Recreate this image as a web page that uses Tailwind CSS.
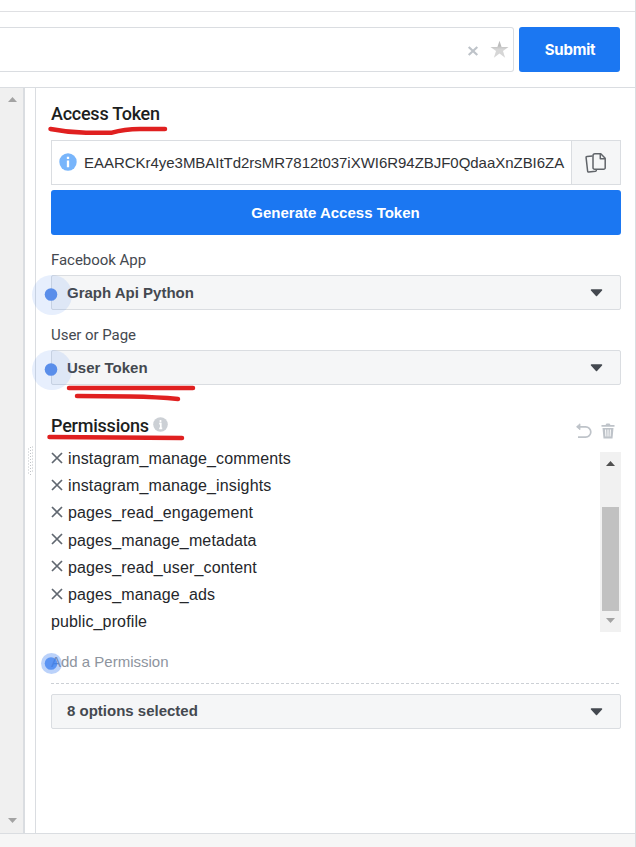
<!DOCTYPE html>
<html lang="en">
<head>
<meta charset="utf-8">
<title>Graph API Explorer</title>
<script src="https://cdn.jsdelivr.net/npm/@tailwindcss/browser@4"></script>
</head>
<body class="bg-white">
<div class="relative flex h-[847px] w-[636px] flex-col overflow-hidden border-r border-[#dadde1] bg-white font-['Liberation_Sans',Arial,sans-serif] text-[#1c1e21]">
  <div class="h-3 shrink-0 border-b border-[#dfe0e3]"></div>
  <header class="flex h-[76px] shrink-0 items-start gap-[5px] border-b border-[#dadde1] pt-[15px]">
    <div class="flex h-[45px] w-[514px] items-center justify-end gap-[11px] rounded-r-[3px] border border-l-0 border-[#dadde1] pr-[4px]">
      <svg class="mt-[2px] h-[12px] w-[12px]" viewBox="0 0 12 12"><path d="M1.700 2l8.600 8M10.300 2l-8.600 8" stroke="#bec3c9" stroke-width="2.200"/></svg>
      <svg class="h-[19px] w-[19px]" viewBox="0 0 19 19"><defs><linearGradient id="s" x2="0" y2="1"><stop offset=".3" stop-color="#bcbcbc"/><stop offset=".5" stop-color="#d6d6d6"/></linearGradient></defs><path d="M9.500 .7l2.100 6.200h6.900l-5.500 4 2.100 6.800-5.600-4.100-5.600 4.100L6 10.900.5 6.900h6.900z" fill="url(#s)"/></svg>
    </div>
    <button class="flex h-[45px] w-[101px] items-center justify-center rounded-[3px] bg-[#1b77f2] pt-[2px] pl-px font-['Inter',sans-serif] text-[15px] font-bold tracking-[-0.2px] text-white">Submit</button>
  </header>
  <main class="flex h-[745px] shrink-0">
    <div class="flex w-[25px] shrink-0 flex-col items-center justify-between border-r-2 border-[#dadde1] bg-[#f0f0f0] pt-[9px] pb-[10px] pl-[2px]">
      <svg class="h-[5px] w-[9px]" viewBox="0 0 9 5"><path d="M0 5h9L4.500 0z" fill="#a3a3a3"/></svg>
      <svg class="h-[5px] w-[9px]" viewBox="0 0 9 5"><path d="M0 0h9L4.500 5z" fill="#a3a3a3"/></svg>
    </div>
    <div class="w-[11px] shrink-0 border-r border-[#dadde1] pt-[358px] pl-[3px]">
      <svg class="h-[30px] w-[5px]" viewBox="0 0 5 30"><g stroke="#bfc2c6" stroke-dasharray="1 2"><path d="M.5 2.500v27M2.500 1v28M4.500 .5v27"/></g></svg>
    </div>
    <section class="flex w-[599px] shrink-0 flex-col pr-[14px] pl-[15px]">
      <h2 class="mt-[14px] h-[24px] font-['Roboto',sans-serif] text-[18px] leading-[24px] font-medium tracking-[-0.25px]">Access Token</h2>
      <div class="mt-[14px] flex h-[45px] border border-[#dadde1]">
        <div class="flex w-[519px] items-center pl-[7px]">
          <svg class="-mt-px h-[18px] w-[18px] shrink-0" viewBox="0 0 18 18"><circle cx="9" cy="9" r="8.700" fill="#78b5fb"/><path d="M9 3.800v2.200M9 7.400v6.800" stroke="white" stroke-width="2.300" fill="none"/></svg>
          <div class="ml-[7px] w-[484px] overflow-hidden pt-[2px] text-[15px] tracking-[-0.03px] whitespace-nowrap text-[#303236]"><span>EAARCKr4ye3MBAItTd2rsMR7812t037iXWI6R94ZBJF0QdaaXnZBI6ZA</span></div>
        </div>
        <div class="flex flex-1 items-center justify-center border-l border-[#dadde1] bg-[#f5f6f7]">
          <svg class="h-[22px] w-[22px]" viewBox="0 0 22 22" fill="none" stroke="#606469" stroke-width="1.500" stroke-linejoin="round"><path d="M7.500 4L2 4.500q-1 .1-.9 1.100L2.600 19q.1 1.100 1.200 1L10.500 19.200q1-.2 1-1.700"/><path d="M10 1.800h5.800l4.400 4.400v9.500a1.600 1.600 0 0 1-1.600 1.600H9.600A1.600 1.600 0 0 1 8 15.700V3.800a2 2 0 0 1 2-2z"/><path d="M15.300 2v4.700h4.700"/></svg>
        </div>
      </div>
      <button class="mt-[5px] flex h-[45px] shrink-0 items-center justify-center rounded-[3px] bg-[#1b77f2] pt-[2px] pr-px text-[15px] font-bold text-white"><span>Generate Access Token</span></button>
      <label class="mt-[15px] h-[20px] font-['Roboto',sans-serif] text-[15px] leading-[20px] tracking-[-0.04px] text-[#444950]"><span>Facebook App</span></label>
      <div class="mt-[5px] flex h-[35px] items-center justify-between rounded-[2px] border border-[#dadde1] bg-[#f5f6f7] pr-[17px] pl-[15px] text-[15px] font-bold text-[#444950]"><span class="pt-[2px]">Graph Api Python</span>
        <svg class="mt-px h-[8px] w-[13px]" viewBox="0 0 13 8"><path d="M1.500 1h10L6.500 6.500z" fill="#444950" stroke="#444950" stroke-width="1.500" stroke-linejoin="round"/></svg></div>
      <label class="mt-[15px] h-[20px] font-['Roboto',sans-serif] text-[15px] leading-[20px] tracking-[-0.04px] text-[#444950]"><span>User or Page</span></label>
      <div class="mt-[5px] flex h-[35px] items-center justify-between rounded-[2px] border border-[#dadde1] bg-[#f5f6f7] pr-[17px] pl-[15px] text-[15px] font-bold text-[#444950]"><span class="pt-[2px]">User Token</span>
        <svg class="mt-px h-[8px] w-[13px]" viewBox="0 0 13 8"><path d="M1.500 1h10L6.500 6.500z" fill="#444950" stroke="#444950" stroke-width="1.500" stroke-linejoin="round"/></svg></div>
      <div class="mt-[29px] flex h-[24px] items-center">
        <h2 class="w-[98px] font-['Roboto',sans-serif] text-[18px] leading-[24px] font-medium tracking-[-0.22px]">Permissions</h2>
        <svg class="mb-[4px] ml-[4px] h-[15px] w-[15px]" viewBox="0 0 15 15"><circle cx="7.500" cy="7.500" r="7.300" fill="#ccd0d5"/><path d="M7.500 3v2.200M6.200 6.600h1.600v5M6.200 11.300h3" stroke="white" stroke-width="1.700" fill="none"/></svg>
        <svg class="mt-[9px] ml-auto h-[16px] w-[17px]" viewBox="0 0 17 16" fill="none" stroke="#bec3c9" stroke-width="1.700"><path d="M5 .8L1.500 3.800l3.500 3z" fill="#bec3c9" stroke-width=".8"/><path d="M2 3.800h8.600a5.200 5.200 0 0 1 0 10.400H3"/></svg>
        <svg class="mt-[9px] mr-[6px] ml-[9px] h-[16px] w-[14px]" viewBox="0 0 14 16"><path d="M.5 2h4L5.500.5h3L9.500 2h4v1.700H.5zM1.500 5h11l-1 10.500h-9z" fill="#bec3c9"/><path d="M4.600 6.500l.3 7M7 6.500v7M9.400 6.500l-.3 7" stroke="white"/></svg>
      </div>
      <div class="mt-[14px] flex h-[180px] justify-between">
        <ul class="-mt-[7px] text-[16px] leading-[27.200px] tracking-[0.13px] text-[#25272b]">
          <li class="flex items-center gap-[5px]"><svg class="-mt-[2px] h-[12px] w-[12px]" viewBox="0 0 12 12"><path d="M1 1l10 10M11 1L1 11" stroke="#606770" stroke-width="1.700"/></svg><span>instagram_manage_comments</span></li>
          <li class="flex items-center gap-[5px]"><svg class="-mt-[2px] h-[12px] w-[12px]" viewBox="0 0 12 12"><path d="M1 1l10 10M11 1L1 11" stroke="#606770" stroke-width="1.700"/></svg><span>instagram_manage_insights</span></li>
          <li class="flex items-center gap-[5px]"><svg class="-mt-[2px] h-[12px] w-[12px]" viewBox="0 0 12 12"><path d="M1 1l10 10M11 1L1 11" stroke="#606770" stroke-width="1.700"/></svg><span>pages_read_engagement</span></li>
          <li class="flex items-center gap-[5px]"><svg class="-mt-[2px] h-[12px] w-[12px]" viewBox="0 0 12 12"><path d="M1 1l10 10M11 1L1 11" stroke="#606770" stroke-width="1.700"/></svg><span>pages_manage_metadata</span></li>
          <li class="flex items-center gap-[5px]"><svg class="-mt-[2px] h-[12px] w-[12px]" viewBox="0 0 12 12"><path d="M1 1l10 10M11 1L1 11" stroke="#606770" stroke-width="1.700"/></svg><span>pages_read_user_content</span></li>
          <li class="flex items-center gap-[5px]"><svg class="-mt-[2px] h-[12px] w-[12px]" viewBox="0 0 12 12"><path d="M1 1l10 10M11 1L1 11" stroke="#606770" stroke-width="1.700"/></svg><span>pages_manage_ads</span></li>
          <li>public_profile</li>
        </ul>
        <div class="flex w-[21px] flex-col items-center bg-[#f1f1f1] pt-[9px]">
          <svg class="h-[5px] w-[9px]" viewBox="0 0 9 5"><path d="M0 5h9L4.500 0z" fill="#505050"/></svg>
          <div class="mt-[41px] h-[104px] w-[17px] bg-[#c1c1c1]"></div>
          <svg class="mt-[7px] h-[5px] w-[9px]" viewBox="0 0 9 5"><path d="M0 0h9L4.500 5z" fill="#a3a3a3"/></svg>
        </div>
      </div>
      <div class="mt-[20px] h-[32px] text-[15px] leading-[20px] text-[#8d949e]"><span>Add a Permission</span></div>
      <svg class="-mt-px h-px w-full shrink-0" viewBox="0 0 570 1"><path d="M0 .5h570" stroke="#ccd0d5" stroke-dasharray="3 2"/></svg>
      <div class="mt-[10px] flex h-[35px] items-center justify-between rounded-[2px] border border-[#dadde1] bg-[#f5f6f7] pr-[17px] pl-[15px] text-[15px] font-bold text-[#444950]"><span>8 options selected</span>
        <svg class="h-[8px] w-[13px]" viewBox="0 0 13 8"><path d="M1.500 1h10L6.500 6.500z" fill="#444950" stroke="#444950" stroke-width="1.500" stroke-linejoin="round"/></svg></div>
    </section>
  </main>
  <footer class="-mr-px flex-1 border-t border-[#dadde1] bg-[#f6f6f6]"></footer>
  <svg class="pointer-events-none absolute inset-0 h-[847px] w-[636px]" viewBox="0 0 636 847" fill="none" stroke="#e02020" stroke-width="4.500" stroke-linecap="round" stroke-linejoin="round">
    <g stroke="none" fill="#3b7ff0"><circle cx="52" cy="295" r="20" fill-opacity=".12"/><circle cx="51" cy="294.500" r="6.300" fill="#5a8eea"/><circle cx="52" cy="370" r="20" fill-opacity=".12"/><circle cx="51" cy="369.500" r="6.300" fill="#5a8eea"/><circle cx="51.500" cy="663.500" r="10.500" fill-opacity=".35"/><circle cx="51" cy="663.500" r="6.300" fill="#3b7ff0" fill-opacity=".75"/></g>
    <path d="M50.500 129Q68 132.500 86 132.700H112Q124 129 140 129H165"/>
    <path d="M69 388H193M77 396Q102 396 130 396.500T178 399M49.500 437L182 438"/>
  </svg>
</div>
</body>
</html>
